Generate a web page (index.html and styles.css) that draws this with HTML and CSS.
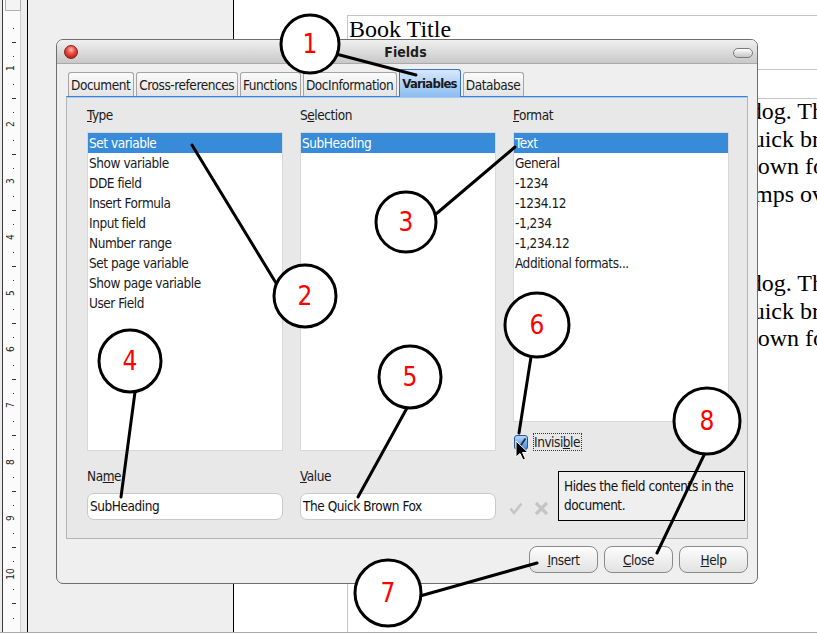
FILE: index.html
```html
<!DOCTYPE html>
<html>
<head>
<meta charset="utf-8">
<title>Fields</title>
<link rel="stylesheet" href="styles.css">
</head>
<body>
<div class="screen">
  <div class="ruler">
    <div class="ruler-strip">
      <div class="ruler-cap"></div>
      <div class="ruler-unit"><span class="rn"></span><span class="rd"></span><span class="rh"></span><span class="rd"></span></div>
      <div class="ruler-unit"><span class="rn">1</span><span class="rd"></span><span class="rh"></span><span class="rd"></span></div>
      <div class="ruler-unit"><span class="rn">2</span><span class="rd"></span><span class="rh"></span><span class="rd"></span></div>
      <div class="ruler-unit"><span class="rn">3</span><span class="rd"></span><span class="rh"></span><span class="rd"></span></div>
      <div class="ruler-unit"><span class="rn">4</span><span class="rd"></span><span class="rh"></span><span class="rd"></span></div>
      <div class="ruler-unit"><span class="rn">5</span><span class="rd"></span><span class="rh"></span><span class="rd"></span></div>
      <div class="ruler-unit"><span class="rn">6</span><span class="rd"></span><span class="rh"></span><span class="rd"></span></div>
      <div class="ruler-unit"><span class="rn">7</span><span class="rd"></span><span class="rh"></span><span class="rd"></span></div>
      <div class="ruler-unit"><span class="rn">8</span><span class="rd"></span><span class="rh"></span><span class="rd"></span></div>
      <div class="ruler-unit"><span class="rn">9</span><span class="rd"></span><span class="rh"></span><span class="rd"></span></div>
      <div class="ruler-unit"><span class="rn">10</span><span class="rd"></span><span class="rh"></span><span class="rd"></span></div>
    </div>
  </div>
  <div class="gutter"></div>
  <div class="page">
    <div class="page-margin"></div>
    <div class="page-text">
      <div class="header-frame"><div class="book-title">Book Title</div></div>
      <div class="body-frame">
        <div class="para">
          <div class="line cut">the lazy dog. Th</div>
          <div class="line mid">The quick br</div>
          <div class="line short">quick brown fo</div>
          <div class="line cut">fox jumps ov</div>
        </div>
        <div class="para para-next">
          <div class="line cut">the lazy dog. Th</div>
          <div class="line mid">The quick br</div>
          <div class="line short">quick brown fo</div>
        </div>
      </div>
    </div>
  </div>

  <div class="dialog">
    <div class="titlebar">
      <span class="close-btn"></span>
      <span class="title">Fields</span>
      <span class="min-btn"></span>
    </div>
    <div class="dialog-body">
      <div class="tabs">
        <div class="tab">Document</div>
        <div class="tab">Cross-references</div>
        <div class="tab">Functions</div>
        <div class="tab">DocInformation</div>
        <div class="tab active">Variables</div>
        <div class="tab">Database</div>
      </div>
      <div class="panel">
        <div class="label"><u>T</u>ype</div>
        <div class="label">S<u>e</u>lection</div>
        <div class="label"><u>F</u>ormat</div>

        <ul class="list">
          <li class="sel">Set variable</li>
          <li>Show variable</li>
          <li>DDE field</li>
          <li>Insert Formula</li>
          <li>Input field</li>
          <li>Number range</li>
          <li>Set page variable</li>
          <li>Show page variable</li>
          <li>User Field</li>
        </ul>
        <ul class="list">
          <li class="sel">SubHeading</li>
        </ul>
        <div class="format-col">
          <ul class="list list-format">
            <li class="sel">Text</li>
            <li>General</li>
            <li>-1234</li>
            <li>-1234.12</li>
            <li>-1,234</li>
            <li>-1,234.12</li>
            <li>Additional formats...</li>
          </ul>
          <div class="check-row">
            <span class="checkbox">
              <svg width="14" height="15" viewBox="0 0 14 15">
                <defs>
                  <linearGradient id="cbg" x1="0" y1="0" x2="0" y2="1">
                    <stop offset="0" stop-color="#bcdcfb"/>
                    <stop offset="1" stop-color="#3f86dc"/>
                  </linearGradient>
                </defs>
                <rect x="0.5" y="0.5" width="13" height="14" rx="2.5" fill="url(#cbg)" stroke="#2a5590"/>
                <path d="M3 8 L6 11.5 L11.5 3.5" fill="none" stroke="#1b2c48" stroke-width="1.8"/>
              </svg>
            </span>
            <span class="check-label">Invisi<u>b</u>le</span>
          </div>
        </div>

        <div class="label label-bottom">Na<u>m</u>e</div>
        <div class="label label-bottom"><u>V</u>alue</div>
        <div class="input cell-name">SubHeading</div>
        <div class="input cell-value">The Quick Brown Fox</div>
        <div class="apply-icons">
          <svg width="14" height="13" viewBox="0 0 14 13"><path d="M1.5 6.5 L5 11 L12.5 1.5" fill="none" stroke="#c4c4c4" stroke-width="2.4"/></svg>
          <svg width="15" height="15" viewBox="0 0 15 15"><path d="M2 2 L13 13 M13 2 L2 13" stroke="#c4c4c4" stroke-width="3.2"/></svg>
        </div>
      </div>
      <div class="buttons">
        <div class="btn"><u>I</u>nsert</div>
        <div class="btn"><u>C</u>lose</div>
        <div class="btn"><u>H</u>elp</div>
      </div>
    </div>
    <div class="tooltip">Hides the field contents in the document.</div>
  </div>

  <svg class="callouts" width="817" height="634" viewBox="0 0 817 634">
    <g stroke="#000" stroke-width="3" fill="none" stroke-linecap="round">
      <line x1="336" y1="54" x2="416" y2="75"/>
      <line x1="192" y1="145" x2="276" y2="283"/>
      <line x1="436" y1="214" x2="515" y2="147"/>
      <line x1="135" y1="392" x2="121" y2="497"/>
      <line x1="407" y1="408" x2="358" y2="497"/>
      <line x1="531" y1="357" x2="519" y2="433"/>
      <line x1="420" y1="596" x2="537" y2="563"/>
      <line x1="705" y1="453" x2="657" y2="553"/>
    </g>
    <g stroke="#000" stroke-width="3" fill="#fff">
      <circle cx="310" cy="44" r="29"/>
      <circle cx="305" cy="296" r="31"/>
      <circle cx="406" cy="222" r="30"/>
      <circle cx="130" cy="361" r="31"/>
      <circle cx="410" cy="377" r="31"/>
      <circle cx="537" cy="325" r="32"/>
      <circle cx="388" cy="593" r="33"/>
      <circle cx="707" cy="421" r="33"/>
    </g>
    <g class="callout-num" fill="#ff0000" text-anchor="middle">
      <text x="310" y="53">1</text>
      <text x="305" y="305">2</text>
      <text x="406" y="231">3</text>
      <text x="130" y="370">4</text>
      <text x="410" y="386">5</text>
      <text x="537" y="334">6</text>
      <text x="388" y="602">7</text>
      <text x="707" y="430">8</text>
    </g>
    <path d="M516 441 L516 457 L520 453.5 L523 460 L525.5 459 L522.5 452.5 L528 452.5 Z" fill="#000" stroke="#fff" stroke-width="1"/>
  </svg>
</div>
</body>
</html>
```

FILE: styles.css
```css
html, body {
  margin: 0;
  padding: 0;
  background: #ffffff;
  overflow: hidden;
}

.screen {
  position: relative;
  width: 817px;
  height: 632px;
  border-bottom: 1px solid #a8a8a8;
  display: flex;
  overflow: hidden;
  font-family: "DejaVu Sans Condensed", "DejaVu Sans", sans-serif;
  font-stretch: condensed;
}

/* ---------- ruler ---------- */
.ruler {
  width: 25px;
  padding-left: 2px;
  background: #ececec;
  border-right: 1px solid #000;
  flex: none;
}
.ruler-strip {
  position: relative;
  width: 19px;
  height: 100%;
  background: #fbfbfb;
  border-left: 1px solid #3a3a3a;
  border-right: 1px solid #d0d0d0;
  padding-top: 7px;
  box-sizing: border-box;
}
.ruler-cap {
  position: absolute;
  left: 2px;
  top: -1px;
  width: 16px;
  height: 12px;
  border: 1px solid #b0b0b0;
  box-sizing: border-box;
  background: #f4f4f4;
}
.ruler-unit {
  display: flex;
  flex-direction: column;
  height: 56.2px;
}
.ruler-unit span {
  flex: 0 0 14.05px;
  display: flex;
  align-items: center;
  justify-content: center;
  padding-left: 4px;
}
.rn {
  font-family: "DejaVu Sans", sans-serif;
  font-size: 10px;
  color: #222;
  transform: rotate(-90deg);
  line-height: 1;
}
.rd::before {
  content: "";
  width: 1px;
  height: 1px;
  background: #333;
}
.rh::before {
  content: "";
  width: 4px;
  height: 1px;
  background: #333;
}

.gutter {
  width: 205px;
  flex: none;
  background: #efefef;
}

/* ---------- page ---------- */
.page {
  flex: 1;
  display: flex;
  background: #fff;
  border-left: 1px solid #000;
}
.page-margin {
  width: 113px;
  flex: none;
}
.page-text {
  flex: 1;
  padding-top: 15px;
  font-family: "Liberation Serif", "Times New Roman", serif;
  font-stretch: normal;
  font-size: 24px;
  color: #000;
}
.header-frame {
  height: 53px;
  border-top: 1px solid #c4c4c4;
  border-bottom: 1px solid #c4c4c4;
  border-left: 1px solid #c4c4c4;
}
.book-title {
  padding-left: 1px;
  line-height: 24px;
  padding-top: 1px;
}
.body-frame {
  margin-top: 28px;
  border-top: 1px solid #c4c4c4;
  border-left: 1px solid #c4c4c4;
  height: 600px;
}
.para {
  margin-top: -1px;
}
.para-next {
  margin-top: 62px;
}
.line {
  line-height: 27.5px;
  white-space: nowrap;
  text-align: right;
}
.line.cut {
  margin-right: -7px;
}
.line.mid {
  margin-right: -3px;
}
.line.short {
  margin-right: -8px;
}

/* ---------- dialog ---------- */
.dialog {
  position: absolute;
  left: 56px;
  top: 39px;
  width: 702px;
  height: 545px;
  box-sizing: border-box;
  border: 1px solid #6e6e6e;
  border-radius: 7px;
  background: #efefef;
  display: flex;
  flex-direction: column;
  font-size: 13.5px;
  letter-spacing: -0.45px;
  color: #1a1a1a;
}
.titlebar {
  height: 23px;
  flex: none;
  display: flex;
  align-items: center;
  justify-content: space-between;
  padding: 0 4px 0 7px;
  background: linear-gradient(#f0f0f0, #c8c8c8);
  border-bottom: 1px solid #a9a9a9;
  border-radius: 6px 6px 0 0;
}
.close-btn {
  width: 14px;
  height: 14px;
  border-radius: 50%;
  box-sizing: border-box;
  border: 1px solid #85221b;
  background: radial-gradient(circle at 50% 32%, #ffc4bd 0, #f0574b 35%, #c82a1f 70%, #8e1a12 100%);
}
.title {
  font-weight: bold;
  font-size: 14px;
  letter-spacing: 0;
  color: #1e1e1e;
  margin-top: 1px;
}
.min-btn {
  width: 20px;
  height: 10px;
  border-radius: 5px;
  box-sizing: border-box;
  border: 1px solid #7a7a7a;
  background: linear-gradient(#ffffff, #c4c4c4);
  margin-top: 2px;
}

.dialog-body {
  flex: 1;
  display: flex;
  flex-direction: column;
  padding: 5px 9px 10px 9px;
}
.tabs {
  display: flex;
  align-items: flex-end;
  gap: 2px;
  padding-left: 2px;
  height: 27px;
}
.tab {
  height: 24px;
  box-sizing: border-box;
  padding: 0 3px 0 2px;
  border: 1px solid #a4a4a4;
  border-bottom: none;
  border-radius: 3px 3px 0 0;
  background: linear-gradient(#fafafa, #e4e4e4);
  display: flex;
  align-items: center;
  white-space: nowrap;
}
.tab.active {
  height: 28px;
  margin-bottom: -1px;
  position: relative;
  border-color: #3a74c0;
  background: linear-gradient(#d6e8fc, #8cbcf0);
  font-weight: bold;
  font-size: 13px;
  letter-spacing: -0.75px;
}

.panel {
  height: 443px;
  box-sizing: border-box;
  background: #e8e8e8;
  border: 1px solid #b4b4b4;
  border-top: 1px solid #3b80d6;
  box-shadow: inset 0 1px 0 #a9cbf2;
  padding: 9px 18px 18px 20px;
  display: grid;
  grid-template-columns: 196px 196px 216px;
  grid-template-rows: 18px 319px 26px 27px;
  column-gap: 17px;
  row-gap: 8px;
}
.label {
  line-height: 18px;
  white-space: nowrap;
}
.label-bottom {
  grid-row: 3;
  align-self: end;
}
.list {
  list-style: none;
  margin: 0;
  padding: 0;
  background: #fff;
  border: 1px solid #d8d8d8;
  box-sizing: border-box;
  height: 319px;
}
.list li {
  height: 20px;
  line-height: 20px;
  padding-left: 1px;
  white-space: nowrap;
}
.list li.sel {
  background: #388bd9;
  color: #fff;
}
.format-col {
  display: flex;
  flex-direction: column;
}
.list-format {
  height: 290px;
}
.check-row {
  margin-top: 11px;
  display: flex;
  align-items: center;
  height: 18px;
}
.checkbox {
  display: flex;
  margin-left: 1px;
}
.check-label {
  margin-left: 5px;
  border: 1px dotted #333;
  padding: 0 1px 0 0;
  line-height: 16px;
}
.input {
  grid-row: 4;
  background: #fff;
  border: 1px solid #c9c9c9;
  border-radius: 7px;
  box-sizing: border-box;
  height: 27px;
  line-height: 25px;
  padding-left: 2px;
  color: #111;
  white-space: nowrap;
}
.cell-name { grid-column: 1; }
.cell-value { grid-column: 2; }
.apply-icons {
  grid-row: 4;
  grid-column: 3;
  margin-left: -4px;
  display: flex;
  align-items: center;
  gap: 11px;
  padding-top: 3px;
}

.buttons {
  margin-top: 7px;
  display: flex;
  justify-content: flex-end;
  gap: 6px;
}
.btn {
  width: 69px;
  height: 27px;
  box-sizing: border-box;
  border: 1px solid #8a8a8a;
  border-radius: 8px;
  background: linear-gradient(#fdfdfd, #e2e2e2);
  display: flex;
  align-items: center;
  justify-content: center;
  color: #1a1a1a;
}

.tooltip {
  position: absolute;
  left: 501px;
  top: 431px;
  width: 187px;
  height: 50px;
  box-sizing: border-box;
  border: 1px solid #000;
  background: #efefef;
  padding: 5px 4px 0 5px;
  line-height: 19px;
  color: #111;
}

/* ---------- callouts ---------- */
.callouts {
  position: absolute;
  left: 0;
  top: 0;
  pointer-events: none;
}
.callout-num {
  font-family: "DejaVu Sans", sans-serif;
  font-size: 26px;
}
```
